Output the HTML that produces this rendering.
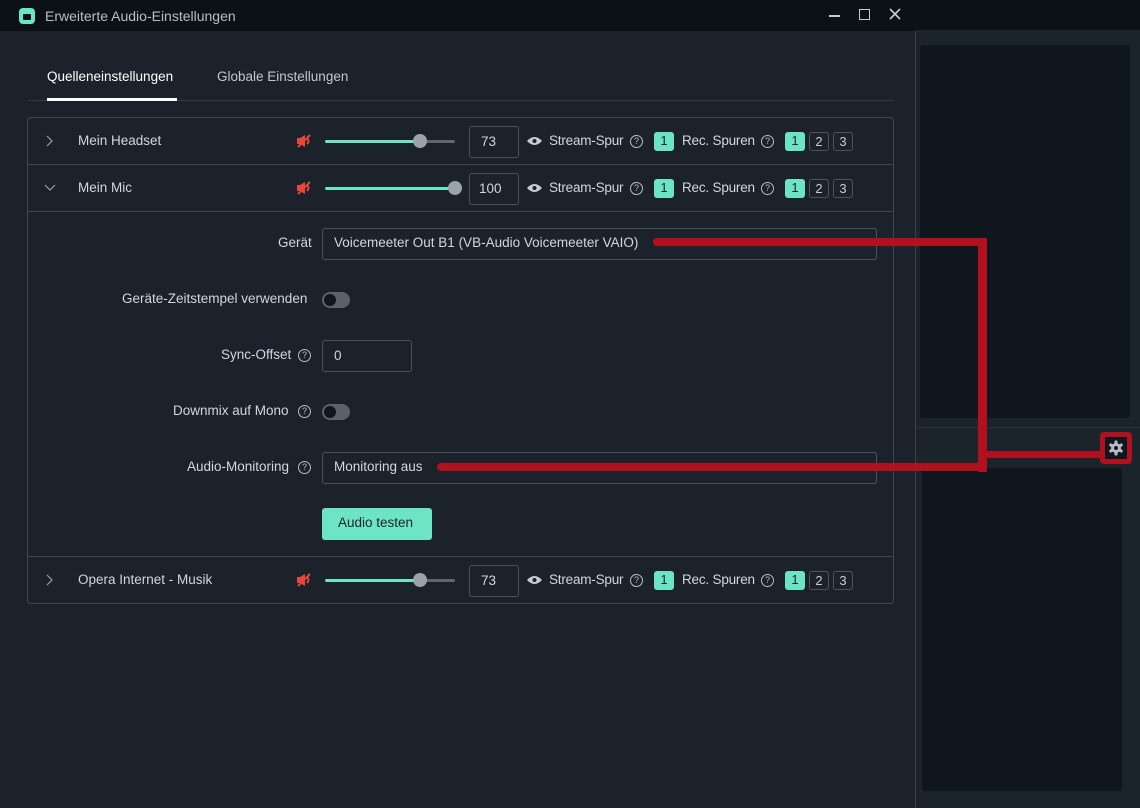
<!DOCTYPE html>
<html><head><meta charset="utf-8"><style>
*{margin:0;padding:0;box-sizing:border-box}
body{width:1140px;height:808px;overflow:hidden;background:#1b232b;font-family:"Liberation Sans",sans-serif;font-size:13.5px;color:#d3d7dc;position:relative}
.a{position:absolute}
.t{position:absolute;white-space:nowrap;line-height:16px}
.q{position:absolute;width:13px;height:13px;border:1.3px solid #b8bcc2;border-radius:50%;font-size:9px;line-height:11px;text-align:center;color:#b8bcc2}
.b{position:absolute;width:20px;height:19px;border-radius:3px;font-size:13px;line-height:18px;text-align:center}
.on{background:#6de5c5;color:#1b222c}
.off{border:1px solid #4c555f;color:#c8ccd0}
.inp{position:absolute;border:1px solid #4a535d;border-radius:3px}
.red{position:absolute;background:#b1101e}
</style></head><body>
<div class="a" style="left:916px;top:0;width:224px;height:30px;background:#0c1116"></div>
<div class="a" style="left:920px;top:45px;width:210px;height:373px;background:#0f161d;border-radius:3px"></div>
<div class="a" style="left:916px;top:427px;width:224px;height:1px;background:#2a333c"></div>
<div class="a" style="left:922px;top:468px;width:200px;height:323px;background:#0f161d;border-radius:3px"></div>
<div class="a" style="left:0;top:0;width:916px;height:808px;background:#1b222c;border-right:1px solid #3a434d"></div>
<div class="a" style="left:0;top:0;width:916px;height:31px;background:#0c1116"></div>
<div class="a" style="left:19px;top:8px;width:16px;height:16px;background:#6de5c5;border-radius:4px"></div>
<div class="a" style="left:23px;top:14px;width:8px;height:6px;background:#0c1116;border-radius:1px"></div>
<div class="t" style="left:45px;top:8px;color:#b9bec4;font-size:14px">Erweiterte Audio-Einstellungen</div>
<div class="a" style="left:829px;top:15px;width:11px;height:1.5px;background:#c8ccd0"></div>
<div class="a" style="left:859px;top:9px;width:11px;height:11px;border:1.5px solid #c8ccd0"></div>
<svg class="a" style="left:889px;top:8px" width="12" height="12" viewBox="0 0 12 12"><path d="M1 1L11 11M11 1L1 11" stroke="#c8ccd0" stroke-width="1.6"/></svg>
<div class="t" style="left:47px;top:69px;color:#fff">Quelleneinstellungen</div>
<div class="t" style="left:217px;top:69px;color:#c3c8cd">Globale Einstellungen</div>
<div class="a" style="left:28px;top:100px;width:865px;height:1px;background:#333c46"></div>
<div class="a" style="left:47px;top:98px;width:130px;height:3px;background:#fff"></div>
<div class="a" style="left:27px;top:117px;width:867px;height:487px;border:1px solid #3f4852;border-radius:4px"></div>
<div class="a" style="left:28px;top:164px;width:865px;height:1px;background:#3f4852"></div>
<div class="a" style="left:28px;top:211px;width:865px;height:1px;background:#3f4852"></div>
<div class="a" style="left:28px;top:556px;width:865px;height:1px;background:#3f4852"></div>

<svg class="a" style="left:46px;top:135px" width="8" height="12" viewBox="0 0 8 12"><path d="M1 1L6 6L1 11" stroke="#9aa0a7" stroke-width="1.2" fill="none"/></svg>
<div class="t" style="left:78px;top:133px">Mein Headset</div>
<svg class="a" style="left:44px;top:184px" width="12" height="8" viewBox="0 0 12 8"><path d="M1 1L6 6L11 1" stroke="#9aa0a7" stroke-width="1.2" fill="none"/></svg>
<div class="t" style="left:78px;top:180px">Mein Mic</div>
<svg class="a" style="left:46px;top:574px" width="8" height="12" viewBox="0 0 8 12"><path d="M1 1L6 6L1 11" stroke="#9aa0a7" stroke-width="1.2" fill="none"/></svg>
<div class="t" style="left:78px;top:572px">Opera Internet - Musik</div>

<svg class="a" style="left:295px;top:134px" width="18" height="14" viewBox="0 0 18 14"><path d="M2 4h3l5-3v12l-5-3H2z" fill="#e8453a"/><path d="M12 4q3 3 0 6M3 13L15 1" stroke="#e8453a" stroke-width="2" fill="none"/></svg>
<svg class="a" style="left:295px;top:181px" width="18" height="14" viewBox="0 0 18 14"><path d="M2 4h3l5-3v12l-5-3H2z" fill="#e8453a"/><path d="M12 4q3 3 0 6M3 13L15 1" stroke="#e8453a" stroke-width="2" fill="none"/></svg>
<svg class="a" style="left:295px;top:573px" width="18" height="14" viewBox="0 0 18 14"><path d="M2 4h3l5-3v12l-5-3H2z" fill="#e8453a"/><path d="M12 4q3 3 0 6M3 13L15 1" stroke="#e8453a" stroke-width="2" fill="none"/></svg>

<div class="a" style="left:325px;top:140px;width:130px;height:3px;background:#5f666e;border-radius:2px"></div>
<div class="a" style="left:325px;top:140px;width:95px;height:3px;background:#6de5c5;border-radius:2px"></div>
<div class="a" style="left:413px;top:134px;width:14px;height:14px;background:#9ca2a9;border-radius:50%"></div>
<div class="a" style="left:325px;top:187px;width:130px;height:3px;background:#6de5c5;border-radius:2px"></div>
<div class="a" style="left:448px;top:181px;width:14px;height:14px;background:#9ca2a9;border-radius:50%"></div>
<div class="a" style="left:325px;top:579px;width:130px;height:3px;background:#5f666e;border-radius:2px"></div>
<div class="a" style="left:325px;top:579px;width:95px;height:3px;background:#6de5c5;border-radius:2px"></div>
<div class="a" style="left:413px;top:573px;width:14px;height:14px;background:#9ca2a9;border-radius:50%"></div>

<div class="inp" style="left:469px;top:126px;width:50px;height:32px"></div><div class="t" style="left:481px;top:134px">73</div>
<div class="inp" style="left:469px;top:173px;width:50px;height:32px"></div><div class="t" style="left:479px;top:181px">100</div>
<div class="inp" style="left:469px;top:565px;width:50px;height:32px"></div><div class="t" style="left:481px;top:573px">73</div>

<svg class="a" style="left:527px;top:136px" width="15" height="10" viewBox="0 0 15 10"><path d="M0 5Q7.5-3 15 5Q7.5 13 0 5z" fill="#c8ccd0"/><circle cx="7.5" cy="5" r="2" fill="#1b222c"/></svg>
<svg class="a" style="left:527px;top:183px" width="15" height="10" viewBox="0 0 15 10"><path d="M0 5Q7.5-3 15 5Q7.5 13 0 5z" fill="#c8ccd0"/><circle cx="7.5" cy="5" r="2" fill="#1b222c"/></svg>
<svg class="a" style="left:527px;top:575px" width="15" height="10" viewBox="0 0 15 10"><path d="M0 5Q7.5-3 15 5Q7.5 13 0 5z" fill="#c8ccd0"/><circle cx="7.5" cy="5" r="2" fill="#1b222c"/></svg>

<div class="t" style="left:549px;top:133px;letter-spacing:-0.2px">Stream-Spur</div><div class="q" style="left:630px;top:135px">?</div>
<div class="b on" style="left:654px;top:132px">1</div>
<div class="t" style="left:682px;top:133px;letter-spacing:-0.2px">Rec. Spuren</div><div class="q" style="left:761px;top:135px">?</div>
<div class="b on" style="left:785px;top:132px">1</div><div class="b off" style="left:809px;top:132px">2</div><div class="b off" style="left:833px;top:132px">3</div>

<div class="t" style="left:549px;top:180px;letter-spacing:-0.2px">Stream-Spur</div><div class="q" style="left:630px;top:182px">?</div>
<div class="b on" style="left:654px;top:179px">1</div>
<div class="t" style="left:682px;top:180px;letter-spacing:-0.2px">Rec. Spuren</div><div class="q" style="left:761px;top:182px">?</div>
<div class="b on" style="left:785px;top:179px">1</div><div class="b off" style="left:809px;top:179px">2</div><div class="b off" style="left:833px;top:179px">3</div>

<div class="t" style="left:549px;top:572px;letter-spacing:-0.2px">Stream-Spur</div><div class="q" style="left:630px;top:574px">?</div>
<div class="b on" style="left:654px;top:571px">1</div>
<div class="t" style="left:682px;top:572px;letter-spacing:-0.2px">Rec. Spuren</div><div class="q" style="left:761px;top:574px">?</div>
<div class="b on" style="left:785px;top:571px">1</div><div class="b off" style="left:809px;top:571px">2</div><div class="b off" style="left:833px;top:571px">3</div>

<div class="t" style="left:278px;top:235px">Gerät</div>
<div class="inp" style="left:322px;top:228px;width:555px;height:32px"></div>
<div class="t" style="left:334px;top:235px">Voicemeeter Out B1 (VB-Audio Voicemeeter VAIO)</div>

<div class="t" style="left:122px;top:291px">Geräte-Zeitstempel verwenden</div>
<div class="a" style="left:322px;top:292px;width:28px;height:16px;background:#5a6169;border-radius:8px"></div>
<div class="a" style="left:324px;top:294px;width:12px;height:12px;background:#11171e;border-radius:50%"></div>

<div class="t" style="left:221px;top:347px">Sync-Offset</div><div class="q" style="left:298px;top:349px">?</div>
<div class="inp" style="left:322px;top:340px;width:90px;height:32px"></div>
<div class="t" style="left:334px;top:348px">0</div>

<div class="t" style="left:173px;top:403px">Downmix auf Mono</div><div class="q" style="left:298px;top:405px">?</div>
<div class="a" style="left:322px;top:404px;width:28px;height:16px;background:#5a6169;border-radius:8px"></div>
<div class="a" style="left:324px;top:406px;width:12px;height:12px;background:#11171e;border-radius:50%"></div>

<div class="t" style="left:187px;top:459px">Audio-Monitoring</div><div class="q" style="left:298px;top:461px">?</div>
<div class="inp" style="left:322px;top:452px;width:555px;height:32px"></div>
<div class="t" style="left:334px;top:459px">Monitoring aus</div>

<div class="a" style="left:322px;top:508px;width:110px;height:32px;background:#6de5c5;border-radius:3px"></div>
<div class="t" style="left:338px;top:515px;color:#1b222c">Audio testen</div>

<div class="a" style="left:1100px;top:432px;width:32px;height:32px;border:5px solid #b1101e;border-radius:4px;background:#0f161d"></div>
<svg class="a" style="left:1108px;top:440px" width="16" height="16" viewBox="0 0 16 16"><g fill="#b8bdc3"><circle cx="8" cy="8" r="5"/><rect x="6.5" y="0.5" width="3" height="15" rx="1"/><rect x="6.5" y="0.5" width="3" height="15" rx="1" transform="rotate(60 8 8)"/><rect x="6.5" y="0.5" width="3" height="15" rx="1" transform="rotate(120 8 8)"/></g><circle cx="8" cy="8" r="2" fill="#0f161d"/></svg>

<div class="red" style="left:653px;top:238px;width:334px;height:8px;border-radius:4px"></div>
<div class="red" style="left:978px;top:238px;width:9px;height:234px"></div>
<div class="red" style="left:437px;top:463px;width:550px;height:8px;border-radius:4px"></div>
<div class="red" style="left:983px;top:451px;width:120px;height:7px"></div>
</body></html>
